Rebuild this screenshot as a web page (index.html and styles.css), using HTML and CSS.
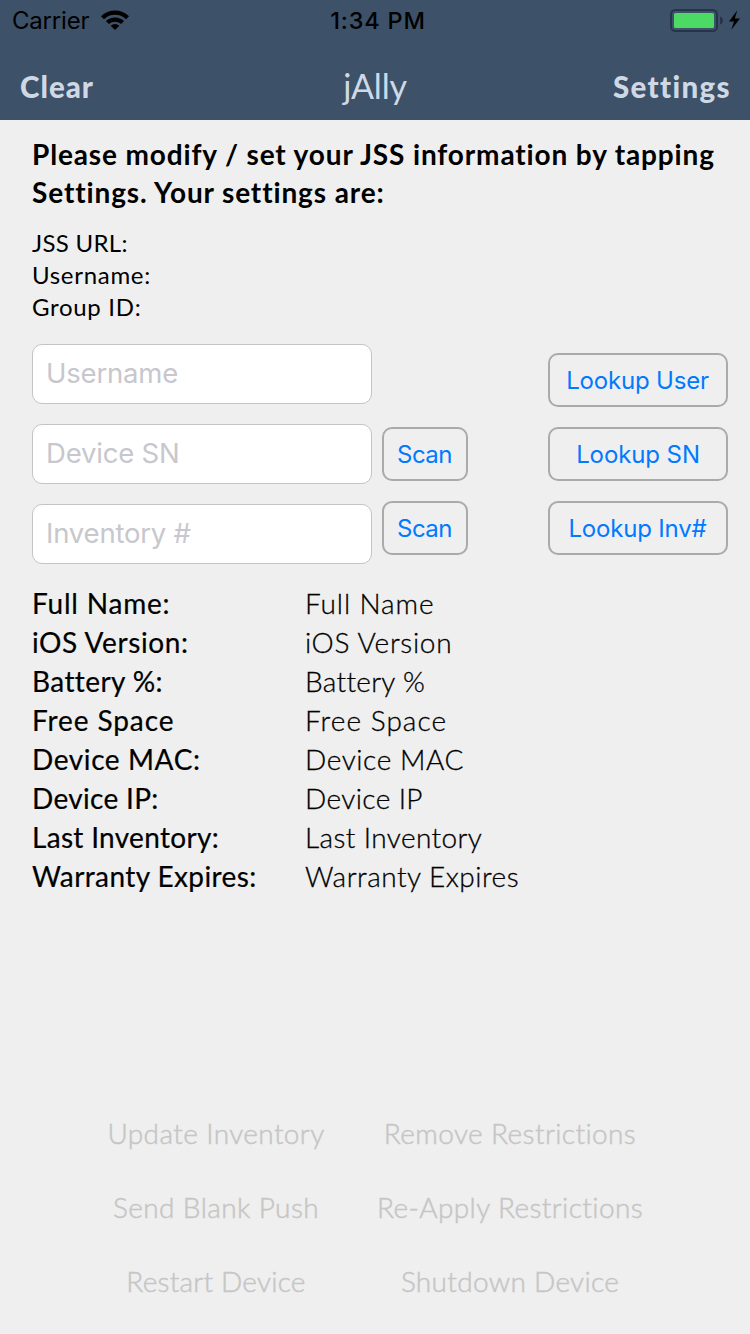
FILE: index.html
```html
<!DOCTYPE html>
<html lang="en">
<head>
<meta charset="utf-8">
<title>jAlly</title>
<link rel="stylesheet" href="styles.css">
</head>
<body>
<header class="top">
  <div class="status">
    <div class="status-left">
      <span class="carrier">Carrier</span>
      <svg class="wifi" width="28" height="20" viewBox="0 0 28 20">
        <path d="M0 6.2A20.2 20.2 0 0 1 28 6.2L25 9.2A16 16 0 0 0 3 9.2Z"/>
        <path d="M4.9 11.1A13.2 13.2 0 0 1 23.1 11.1L20.1 14.1A8.9 8.9 0 0 0 7.9 14.1Z"/>
        <path d="M9.7 15.8A6.3 6.3 0 0 1 18.3 15.8L14 20Z"/>
      </svg>
    </div>
    <span class="time">1:34 PM</span>
    <div class="status-right">
      <svg class="battery" width="72" height="24" viewBox="0 0 72 24">
        <rect x="1" y="1" width="46" height="21" rx="4.5" fill="none" stroke="#26344a" stroke-width="2"/>
        <rect x="4" y="4" width="40" height="15" rx="1.5" fill="#4cd964"/>
        <path d="M50 7.500q3 .8 3 4t-3 4z" fill="#26344a"/>
        <path d="M67.300 1.300L59 12.600h5L61.300 20.700 70 9.400h-5.200z" fill="#000"/>
      </svg>
    </div>
  </div>
  <nav class="nav">
    <span class="nav-btn clear">Clear</span>
    <span class="nav-title">jAlly</span>
    <span class="nav-btn settings">Settings</span>
  </nav>
</header>
<main class="content">
  <h1 class="intro"><span class="intro-a">Please modify / set your JSS information by tapping</span><br><span class="intro-b">Settings. Your settings are:</span></h1>
  <ul class="config">
    <li class="tight">JSS URL:</li>
    <li>Username:</li>
    <li>Group ID:</li>
  </ul>
  <section class="form">
    <div class="fields">
      <input class="field" placeholder="Username">
      <input class="field" placeholder="Device SN">
      <input class="field" placeholder="Inventory #">
    </div>
    <div class="scans">
      <button class="btn scan">Scan</button>
      <button class="btn scan">Scan</button>
    </div>
    <div class="lookups">
      <button class="btn">Lookup User</button>
      <button class="btn sn">Lookup SN</button>
      <button class="btn">Lookup Inv#</button>
    </div>
  </section>
  <dl class="details">
    <dt class="s8">Full Name:</dt><dd class="s9">Full Name</dd>
    <dt class="s6">iOS Version:</dt><dd class="s7">iOS Version</dd>
    <dt class="s4">Battery %:</dt><dd class="s3">Battery %</dd>
    <dt class="s9">Free Space</dt><dd class="s11">Free Space</dd>
    <dt class="s6">Device MAC:</dt><dd class="s6">Device MAC</dd>
    <dt class="s3">Device IP:</dt><dd class="s4">Device IP</dd>
    <dt class="s3">Last Inventory:</dt><dd class="s4">Last Inventory</dd>
    <dt class="s4">Warranty Expires:</dt><dd class="s5">Warranty Expires</dd>
  </dl>
  <section class="actions">
    <span class="s4">Update Inventory</span><span class="s4">Remove Restrictions</span>
    <span class="s4">Send Blank Push</span><span class="s4">Re-Apply Restrictions</span>
    <span class="s2">Restart Device</span><span class="s3">Shutdown Device</span>
  </section>
</main>
</body>
</html>
```
FILE: styles.css
```css
* { box-sizing: border-box; }

body {
  margin: 0;
  width: 750px;
  height: 1334px;
  overflow: hidden;
  background: #efefef;
  color: #000;
  font-family: Lato, "Open Sans", sans-serif;
}

.top {
  height: 120px;
  background: #3d5169;
}

.status {
  display: grid;
  grid-template-columns: 1fr auto 1fr;
  height: 40px;
  padding: 0 9px 0 12px;
  font: 400 24px/42px Inter, sans-serif;
}
.status-left { display: flex; }
.carrier { width: 89px; letter-spacing: -0.2px; }
.wifi { margin-top: 10px; }
.time {
  padding-left: 3px;
  font-size: 23.5px;
  font-weight: 500;
  letter-spacing: 0.8px;
}
.status-right { display: flex; justify-content: flex-end; }
.battery { margin-top: 9px; margin-right: -1px; }

.nav {
  display: grid;
  grid-template-columns: 1fr auto 1fr;
  height: 80px;
  padding: 0 20px;
  color: #cfd9e6;
}
.nav-btn {
  padding-top: 12px;
  font-size: 29.5px;
  font-weight: 900;
  line-height: 70px;
}
.clear { letter-spacing: 1px; }
.settings { letter-spacing: 1.35px; text-align: right; margin-right: -1px; }
.nav-title {
  padding-top: 11px;
  font-size: 34px;
  line-height: 70px;
  letter-spacing: -0.2px;
}

.content { padding: 15px 22px 0 32px; }

.intro {
  margin: 0 -10px 16px 0;
  font-size: 28px;
  font-weight: 700;
  line-height: 38px;
  white-space: nowrap;
}
.intro-a { letter-spacing: 0.86px; }
.intro-b { letter-spacing: 0.88px; }

.config {
  margin: 0 0 21px;
  padding: 0;
  list-style: none;
  font-size: 24px;
  line-height: 32px;
  letter-spacing: 0.7px;
}
.tight { letter-spacing: 0.3px; }

.form {
  display: grid;
  grid-template-columns: 340px 86px 1fr;
  column-gap: 10px;
  height: 220px;
}
.fields { display: flex; flex-direction: column; gap: 20px; }
.field {
  width: 340px;
  height: 60px;
  padding: 0 13px 2px;
  border: 1px solid #c4c4c6;
  border-radius: 10px;
  background: #fff;
  font: 400 27.5px Inter, sans-serif;
  letter-spacing: -0.2px;
}
.field::placeholder { color: #c7c7cd; opacity: 1; }
.scans, .lookups { display: flex; flex-direction: column; gap: 20px; }
.scans { padding-top: 83px; }
.lookups { padding-top: 9px; align-items: flex-end; }
.btn {
  width: 180px;
  height: 54px;
  padding: 1px 1px 0 0;
  border: 2px solid #aaa;
  border-radius: 10px;
  background: none;
  color: #007aff;
  font: 400 24px Inter, sans-serif;
  letter-spacing: -0.18px;
}
.sn { padding-right: 0; letter-spacing: -0.1px; }
.scan { width: 86px; letter-spacing: -0.5px; }

.details {
  display: grid;
  grid-template-columns: 273px 1fr;
  margin: 20px 0 0;
  font-size: 28px;
  line-height: 39px;
}
.details dt { font-weight: 400; -webkit-text-stroke: 0.2px; }
.details dd { margin: 0; font-weight: 300; -webkit-text-stroke: 0.3px; }

.actions {
  display: grid;
  grid-template-columns: 294px 294px;
  margin: 200px 0 0 37px;
  color: #c6c6c6;
  font-size: 28px;
  font-weight: 300;
  line-height: 74px;
  text-align: center;
  -webkit-text-stroke: 0.5px;
}

.s2 { letter-spacing: 0.23px; }
.s3 { letter-spacing: 0.31px; }
.s4 { letter-spacing: 0.4px; }
.s5 { letter-spacing: 0.5px; }
.s6 { letter-spacing: 0.6px; }
.s7 { letter-spacing: 0.7px; }
.s8 { letter-spacing: 0.79px; }
.s9 { letter-spacing: 0.9px; }
.s11 { letter-spacing: 1.05px; }
```
